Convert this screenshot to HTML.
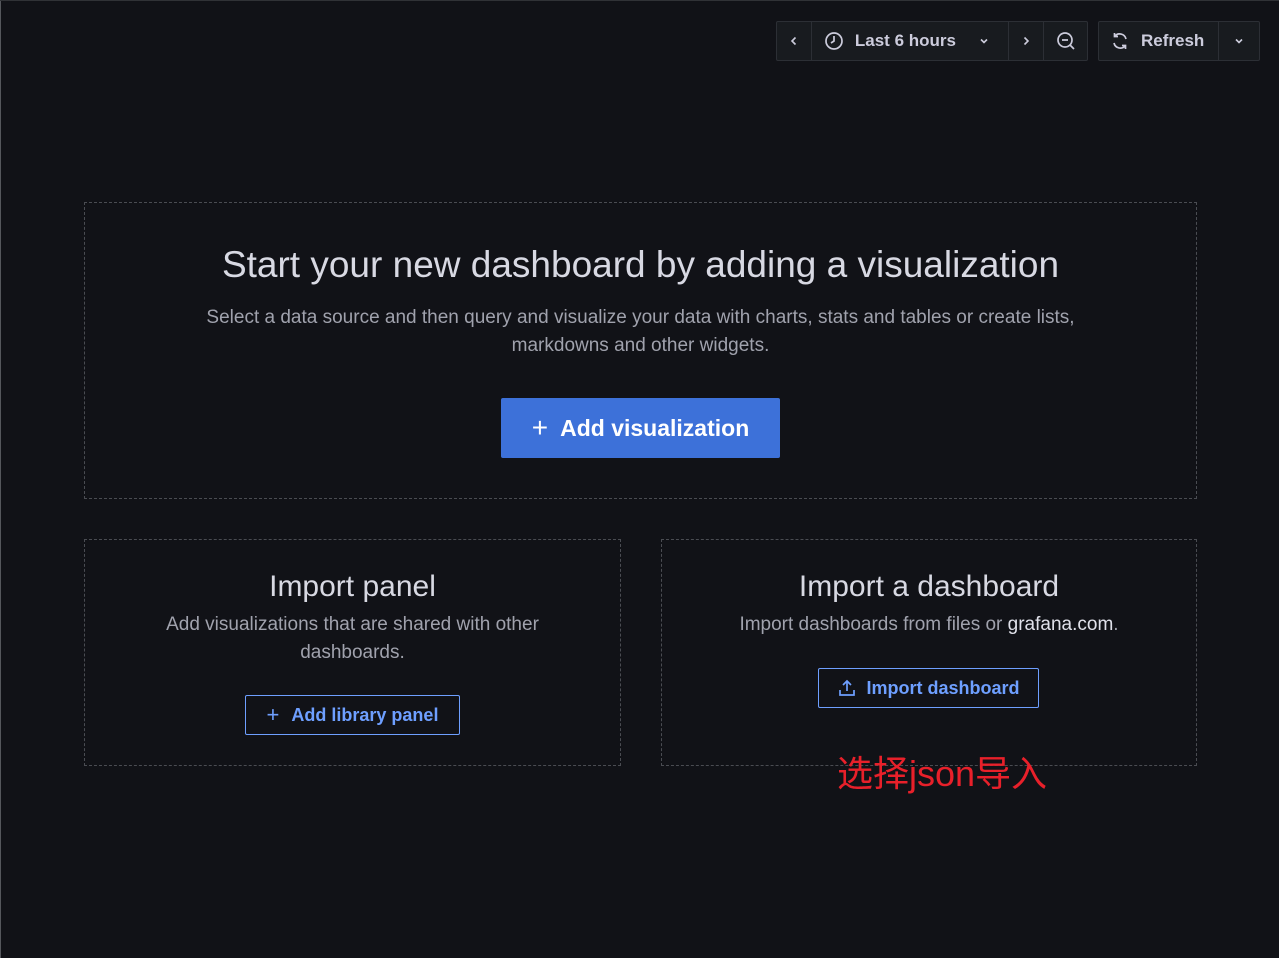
<!DOCTYPE html>
<html><head><meta charset="utf-8"><style>
*{box-sizing:border-box;margin:0;padding:0}
body{width:1279px;height:958px;background:#111217;font-family:"Liberation Sans",sans-serif;position:relative;overflow:hidden}
.abs{position:absolute}
.tb{position:absolute;top:21px;height:40px;background:#181b1f;border:1px solid #2c2f35;border-radius:2px;display:flex;color:#ccccdc;font-size:17px;font-weight:bold}
.tb>div{display:flex;align-items:center;justify-content:center;border-right:1px solid #2c2f35;height:100%}
.tb>div:last-child{border-right:none}
.box{position:absolute;border:1px dashed #4a4c52;text-align:center;color:#ccccdc}
.cen{position:absolute;left:0;right:0;text-align:center}
</style></head><body>
<div class="abs" style="left:0;top:0;width:1px;height:958px;background:#55575c"></div>
<div class="abs" style="left:0;top:0;width:1279px;height:1px;background:#303236"></div>
<div class="tb" style="left:776px;width:312px">
 <div style="width:35px"><svg width="12" height="12" viewBox="0 0 12 12"><path d="M7.5 2.5L4 6l3.5 3.5" stroke="#ccccdc" stroke-width="1.6" fill="none"/></svg></div>
 <div style="width:198px;justify-content:flex-start;padding-left:12px"><svg width="20" height="20" viewBox="0 0 20 20"><circle cx="10" cy="10" r="8" stroke="#ccccdc" stroke-width="1.7" fill="none"/><path d="M10 5v5l-3 2" stroke="#ccccdc" stroke-width="1.7" fill="none"/></svg><span style="margin-left:11px">Last 6 hours</span><svg style="margin-left:22px" width="12" height="12" viewBox="0 0 12 12"><path d="M3 4.5l3 3 3-3" stroke="#ccccdc" stroke-width="1.6" fill="none"/></svg></div>
 <div style="width:35px"><svg width="12" height="12" viewBox="0 0 12 12"><path d="M4.5 2.5L8 6l-3.5 3.5" stroke="#ccccdc" stroke-width="1.6" fill="none"/></svg></div>
 <div style="width:43px"><svg width="20" height="20" viewBox="0 0 20 20"><circle cx="9" cy="9" r="7" stroke="#ccccdc" stroke-width="1.7" fill="none"/><path d="M6 9h6M14 14l4 4" stroke="#ccccdc" stroke-width="1.7" fill="none"/></svg></div>
</div>
<div class="tb" style="left:1098px;width:162px">
 <div style="width:120px;justify-content:flex-start;padding-left:11px"><svg width="20" height="20" viewBox="0 0 20 20"><path d="M16 8A6.5 6.5 0 0 0 4.5 5.5M4 12a6.5 6.5 0 0 0 11.5 2.5M4.5 2v3.5H8M15.5 18v-3.5H12" stroke="#ccccdc" stroke-width="1.7" fill="none"/></svg><span style="margin-left:11px">Refresh</span></div>
 <div style="width:40px"><svg width="12" height="12" viewBox="0 0 12 12"><path d="M3 4.5l3 3 3-3" stroke="#ccccdc" stroke-width="1.6" fill="none"/></svg></div>
</div>

<div class="box" style="left:84px;top:202px;width:1113px;height:297px">
 <div class="cen" style="top:41px;font-size:37px;color:#d8d9e3">Start your new dashboard by adding a visualization</div>
 <div class="cen" style="top:101px;font-size:19px;line-height:28px;color:#a0a2ad">Select a data source and then query and visualize your data with charts, stats and tables or create lists,<br>markdowns and other widgets.</div>
 <div class="abs" style="left:416px;top:195px;width:279px;height:60px;background:#3d71d9;border-radius:2px;color:#fff;font-size:23px;font-weight:bold;display:flex;align-items:center;justify-content:center"><span style="font-weight:normal;font-size:28px;margin-right:12px">+</span>Add visualization</div>
</div>

<div class="box" style="left:84px;top:539px;width:537px;height:227px">
 <div class="cen" style="top:30px;font-size:30px;color:#d8d9e3">Import panel</div>
 <div class="cen" style="top:71px;font-size:19px;line-height:28px;color:#a0a2ad">Add visualizations that are shared with other<br>dashboards.</div>
 <div class="abs" style="left:160px;top:155px;width:215px;height:40px;border:1px solid #6e9fff;border-radius:2px;color:#6e9fff;font-size:18px;font-weight:bold;display:flex;align-items:center;justify-content:center"><span style="font-weight:normal;font-size:22px;margin-right:12px">+</span>Add library panel</div>
</div>

<div class="box" style="left:661px;top:539px;width:536px;height:227px">
 <div class="cen" style="top:30px;font-size:30px;color:#d8d9e3">Import a dashboard</div>
 <div class="cen" style="top:71px;font-size:19px;line-height:28px;color:#a0a2ad">Import dashboards from files or <span style="color:#e0e1ea">grafana.com</span>.</div>
 <div class="abs" style="left:156px;top:128px;width:221px;height:40px;border:1px solid #6e9fff;border-radius:2px;color:#6e9fff;font-size:18px;font-weight:bold;display:flex;align-items:center;justify-content:center"><svg width="20" height="20" viewBox="0 0 20 20" style="margin-right:9px"><path d="M10 13V3M6 7l4-4 4 4M3 12v5h14v-5" stroke="#6e9fff" stroke-width="1.7" fill="none"/></svg>Import dashboard</div>
</div>

<div class="abs" style="left:837px;top:752px;font-size:36px;color:#e8202a;font-family:'Liberation Sans','Noto Sans CJK SC',sans-serif;line-height:44px">选择json导入</div>
</body></html>
